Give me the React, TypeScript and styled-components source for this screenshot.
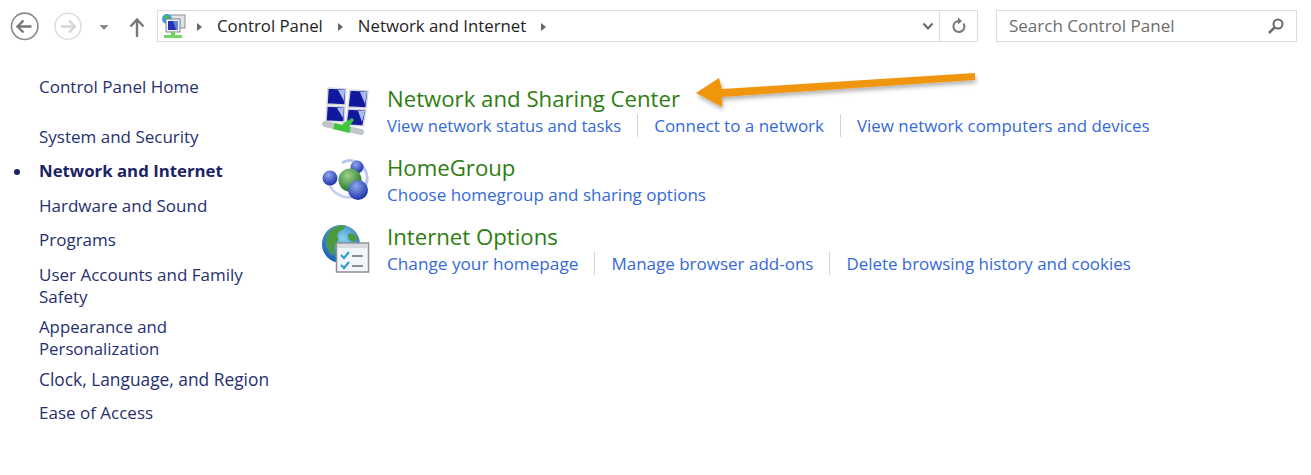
import React from "react";
import styled, { createGlobalStyle } from "styled-components";

const Global = createGlobalStyle`
  html, body { margin: 0; padding: 0; background: #fff; }
  body { font-family: "Open Sans", "Noto Sans", "Liberation Sans", sans-serif; width: 1311px; height: 475px; overflow: hidden; }
`;
const Page = styled.div`position: relative; width: 1311px; height: 475px; background: #fff;`;
const Toolbar = styled.header`display: flex; align-items: center; height: 32px; padding: 10px 14px 0 10px;`;
const NavIcons = styled.nav`display: flex; align-items: center; width: 147px; flex: none;`;
const NavSvg = styled.svg<{ $ml?: number }>`display: block; flex: none; margin-left: ${p => p.$ml ?? 0}px;`;
const Address = styled.div`
  box-sizing: border-box; display: flex; align-items: center; width: 821px; height: 32px;
  border: 1px solid #dcdcdc; flex: none;
`;
const Crumbs = styled.div`display: flex; align-items: center; flex: 1; padding-left: 2px; font-size: 16.8px; color: #1e1e1e;`;
const Crumb = styled.span`margin-right: 15px; margin-bottom: 2px;`;
const Caret = styled.span`
  width: 0; height: 0; border-left: 5px solid #666; border-top: 4px solid transparent; border-bottom: 4px solid transparent;
  margin: 1px 15px 0 0; flex: none;
`;
const AddrIcon = styled.div`display: flex; align-items: center; justify-content: center; width: 23px; height: 30px; flex: none;`;
const Refresh = styled(AddrIcon)`width: 37px; border-left: 1px solid #dcdcdc;`;
const SearchBox = styled.div`
  box-sizing: border-box; display: flex; align-items: center; justify-content: space-between; width: 301px; height: 32px;
  margin-left: 18px; padding: 0 11px 0 12px; border: 1px solid #dcdcdc; font-size: 17px; color: #6d6d6d; flex: none;
`;
const SearchText = styled.span`margin-bottom: 2px;`;
const Body = styled.main`display: flex;`;
const Sidebar = styled.aside`width: 283px; flex: none; padding: 34px 0 0 39px; box-sizing: border-box;`;
const SideItem = styled.div<{ $top: number; $active?: boolean; $size?: number }>`
  position: relative; margin-top: ${p => p.$top}px; line-height: 22.5px; width: 235px;
  font-size: ${p => p.$size ?? (p.$active ? 16.8 : 17)}px;
  color: ${p => (p.$active ? "#1b2266" : "#26306e")}; font-weight: ${p => (p.$active ? 700 : 400)};
  ${p => p.$active && `&::before { content: ""; position: absolute; left: -25px; top: 9px; width: 6px; height: 6px; border-radius: 50%; background: #1b2266; }`}
`;
const Content = styled.section`flex: 1; padding: 40px 0 0 39px;`;
const Category = styled.article`display: flex; height: 69px;`;
const IconWrap = styled.div`width: 65px; flex: none; padding-top: 4px;`;
const Title = styled.div`font-size: 22.2px; line-height: 30px; color: #2e7d12; margin-top: 2px;`;
const Links = styled.div`display: flex; align-items: center; height: 23px;`;
const LinkText = styled.a<{ $last?: boolean; $size?: number }>`
  font-size: ${p => p.$size ?? 17}px; color: #3569d8; white-space: nowrap; line-height: 23px;
  ${p => !p.$last && `padding-right: 16px; margin-right: 16px; border-right: 1px solid #d2d2d2;`}
`;
const ArrowOverlay = styled.svg`position: absolute; left: 690px; top: 62px; pointer-events: none;`;

const Back = () => (
  <NavSvg width="30" height="30" viewBox="0 0 30 30">
    <circle cx="14.7" cy="15.3" r="13.2" fill="none" stroke="#8a8a8a" strokeWidth="1.6" />
    <path d="M7.5 15.5h14M13.5 9.5l-6 6 6 6" fill="none" stroke="#777" strokeWidth="2.4" />
  </NavSvg>
);
const Forward = () => (
  <NavSvg width="30" height="30" viewBox="0 0 30 30" $ml={14}>
    <circle cx="14" cy="15.3" r="13" fill="none" stroke="#dedede" strokeWidth="1.6" />
    <path d="M21 15.5H7M15 9.5l6 6-6 6" fill="none" stroke="#d6d6d6" strokeWidth="2.4" />
  </NavSvg>
);
const Drop = () => (
  <NavSvg width="10" height="30" viewBox="0 0 10 30" $ml={15}><path d="M0.5 14h9l-4.5 5z" fill="#8a8a8a" /></NavSvg>
);
const Up = () => (
  <NavSvg width="16" height="30" viewBox="0 0 16 30" $ml={20}>
    <path d="M8 26V9M1.5 15.5L8 8.5l6.5 7" fill="none" stroke="#777" strokeWidth="2.4" />
  </NavSvg>
);
const NetSmall = () => (
  <svg width="27" height="26" viewBox="0 0 27 26" style={{ marginRight: 10, flex: "none" }}>
    <rect x="10" y="2" width="15" height="13" fill="#dfe3e8" stroke="#8b8f96" />
    <circle cx="7" cy="6" r="5" fill="#3aa0d0" />
    <path d="M3 5c2-3 5-3 7-1-2 1-4 2-7 1z" fill="#58b05a" />
    <rect x="6" y="6" width="14" height="13" fill="#f4f6fb" stroke="#7d818c" />
    <path d="M8 8h10v9H8z" fill="#2431b8" />
    <path d="M13 8h5v9h-2z" fill="#5f82dc" />
    <rect x="11" y="19" width="4" height="3" fill="#6fcf5a" />
    <rect x="4" y="22" width="18" height="3" fill="#74d667" />
  </svg>
);
const Chevron = () => (
  <svg width="12" height="10" viewBox="0 0 12 10"><path d="M1.5 2.5L6 7.5l4.5-5" fill="none" stroke="#666" strokeWidth="2" /></svg>
);
const RefreshIcon = () => (
  <svg width="16" height="18" viewBox="0 0 16 18">
    <path d="M12.5 6.5A5.5 5.5 0 1 1 7.5 4" fill="none" stroke="#777" strokeWidth="2" />
    <path d="M7 0.5l4 3.5-4 3.5z" fill="#777" />
  </svg>
);
const SearchIcon = () => (
  <svg width="18" height="18" viewBox="0 0 18 18">
    <circle cx="11" cy="7" r="4.5" fill="none" stroke="#6a6a6a" strokeWidth="2" />
    <path d="M7.5 10.5L2 16" stroke="#6a6a6a" strokeWidth="2.6" />
  </svg>
);
const panes = [
  "6,2 24,3 23,19 5,18",
  "28,4 46,5 44,22 26,21",
  "5,20 23,21 22,36 4,35",
  "26,23 44,24 41,40 24,39",
];
const lights = [
  "16,4 23,4 22,15",
  "38,6 45,6 43,18",
  "15,22 22,22 21,32",
  "36,25 43,25 40,36",
];
const NetIcon = () => (
  <svg width="48" height="50" viewBox="0 0 48 50">
    {panes.map(p => <polygon key={p} points={p} fill="#10189e" stroke="#d4d6dc" strokeWidth="1.5" />)}
    {lights.map(p => <polygon key={p} points={p} fill="#a9bcec" />)}
    <path d="M3 38l36 8" stroke="#c2c6c8" strokeWidth="6" strokeLinecap="round" />
    <path d="M12 40l16 4" stroke="#3fc53a" strokeWidth="6" />
    <path d="M20 38l10-6 2 2-6 8z" fill="#3fc53a" />
  </svg>
);
const HomeIcon = () => (
  <svg width="50" height="48" viewBox="0 0 50 48">
    <defs>
      <radialGradient id="hb" cx="40%" cy="30%" r="70%"><stop offset="0" stopColor="#8fa6ee" /><stop offset="1" stopColor="#1c34a8" /></radialGradient>
      <radialGradient id="hg" cx="40%" cy="30%" r="70%"><stop offset="0" stopColor="#9fd08a" /><stop offset="1" stopColor="#217a2c" /></radialGradient>
    </defs>
    <path d="M20 8c10-8 30 4 24 22" fill="none" stroke="#b8c8ee" strokeWidth="3" />
    <path d="M8 30c2 8 14 14 22 12" fill="none" stroke="#c6d2f0" strokeWidth="3" />
    <circle cx="35" cy="12" r="6.5" fill="url(#hb)" />
    <circle cx="8" cy="23" r="7.5" fill="url(#hb)" />
    <circle cx="28" cy="25" r="11.5" fill="url(#hg)" />
    <circle cx="36" cy="35" r="10" fill="url(#hb)" />
  </svg>
);
const InetIcon = () => (
  <svg width="50" height="50" viewBox="0 0 50 50">
    <defs>
      <radialGradient id="gl" cx="55%" cy="35%" r="65%"><stop offset="0" stopColor="#86d4f2" /><stop offset="1" stopColor="#155fae" /></radialGradient>
    </defs>
    <circle cx="19" cy="20" r="19" fill="url(#gl)" />
    <path d="M6 10c4-7 12-9 18-8-2 4-6 4-8 7s2 6-1 9-3 10-2 13C6 30 2 19 6 10zM26 10c4-1 8 1 10 4l-4 4c-3-1-7-2-6-8z" fill="#4d9a3e" />
    <rect x="14.5" y="19" width="32" height="29" fill="#f4f5f8" stroke="#8d9096" strokeWidth="1.5" />
    <rect x="16" y="20" width="29" height="4" fill="#d9dade" />
    <path d="M19 31l3 3 5-6M19 41l3 3 5-6" fill="none" stroke="#2f9fd6" strokeWidth="2.2" />
    <path d="M30 32h11M30 42h11" stroke="#8b8e9a" strokeWidth="2" />
  </svg>
);

const side: { t: string; top: number; active?: boolean; size?: number }[] = [
  { t: "Control Panel Home", top: 0 },
  { t: "System and Security", top: 27 },
  { t: "Network and Internet", top: 12, active: true },
  { t: "Hardware and Sound", top: 12 },
  { t: "Programs", top: 12 },
  { t: "User Accounts and Family Safety", top: 12 },
  { t: "Appearance and Personalization", top: 7, size: 16.8 },
  { t: "Clock, Language, and Region", top: 7, size: 17.35 },
  { t: "Ease of Access", top: 12 },
];
const cats: { title: string; icon: React.ReactNode; links: { t: string; size?: number }[] }[] = [
  { title: "Network and Sharing Center", icon: <NetIcon />, links: [{ t: "View network status and tasks", size: 16.65 }, { t: "Connect to a network" }, { t: "View network computers and devices", size: 16.9 }] },
  { title: "HomeGroup", icon: <HomeIcon />, links: [{ t: "Choose homegroup and sharing options" }] },
  { title: "Internet Options", icon: <InetIcon />, links: [{ t: "Change your homepage", size: 17.2 }, { t: "Manage browser add-ons" }, { t: "Delete browsing history and cookies", size: 16.9 }] },
];

export default function App() {
  return (
    <Page>
      <Global />
      <Toolbar>
        <NavIcons><Back /><Forward /><Drop /><Up /></NavIcons>
        <Address>
          <Crumbs>
            <NetSmall /><Caret />
            <Crumb>Control Panel</Crumb><Caret />
            <Crumb>Network and Internet</Crumb><Caret />
          </Crumbs>
          <AddrIcon><Chevron /></AddrIcon>
          <Refresh><RefreshIcon /></Refresh>
        </Address>
        <SearchBox><SearchText>Search Control Panel</SearchText><SearchIcon /></SearchBox>
      </Toolbar>
      <Body>
        <Sidebar>
          {side.map(s => <SideItem key={s.t} $top={s.top} $active={s.active} $size={s.size}>{s.t}</SideItem>)}
        </Sidebar>
        <Content>
          {cats.map(c => (
            <Category key={c.title}>
              <IconWrap>{c.icon}</IconWrap>
              <div>
                <Title>{c.title}</Title>
                <Links>{c.links.map((l, i) => <LinkText key={l.t} $size={l.size} $last={i === c.links.length - 1}>{l.t}</LinkText>)}</Links>
              </div>
            </Category>
          ))}
        </Content>
      </Body>
      <ArrowOverlay width="300" height="50" viewBox="0 0 300 50">
        <defs><filter id="sh" x="-10%" y="-50%" width="120%" height="200%"><feDropShadow dx="1" dy="3" stdDeviation="2" floodColor="#000" floodOpacity="0.3" /></filter></defs>
        <path d="M6 31L29 16l3 11 253-16 0 7-253 17 0 10z" fill="#f0960e" filter="url(#sh)" />
      </ArrowOverlay>
    </Page>
  );
}
